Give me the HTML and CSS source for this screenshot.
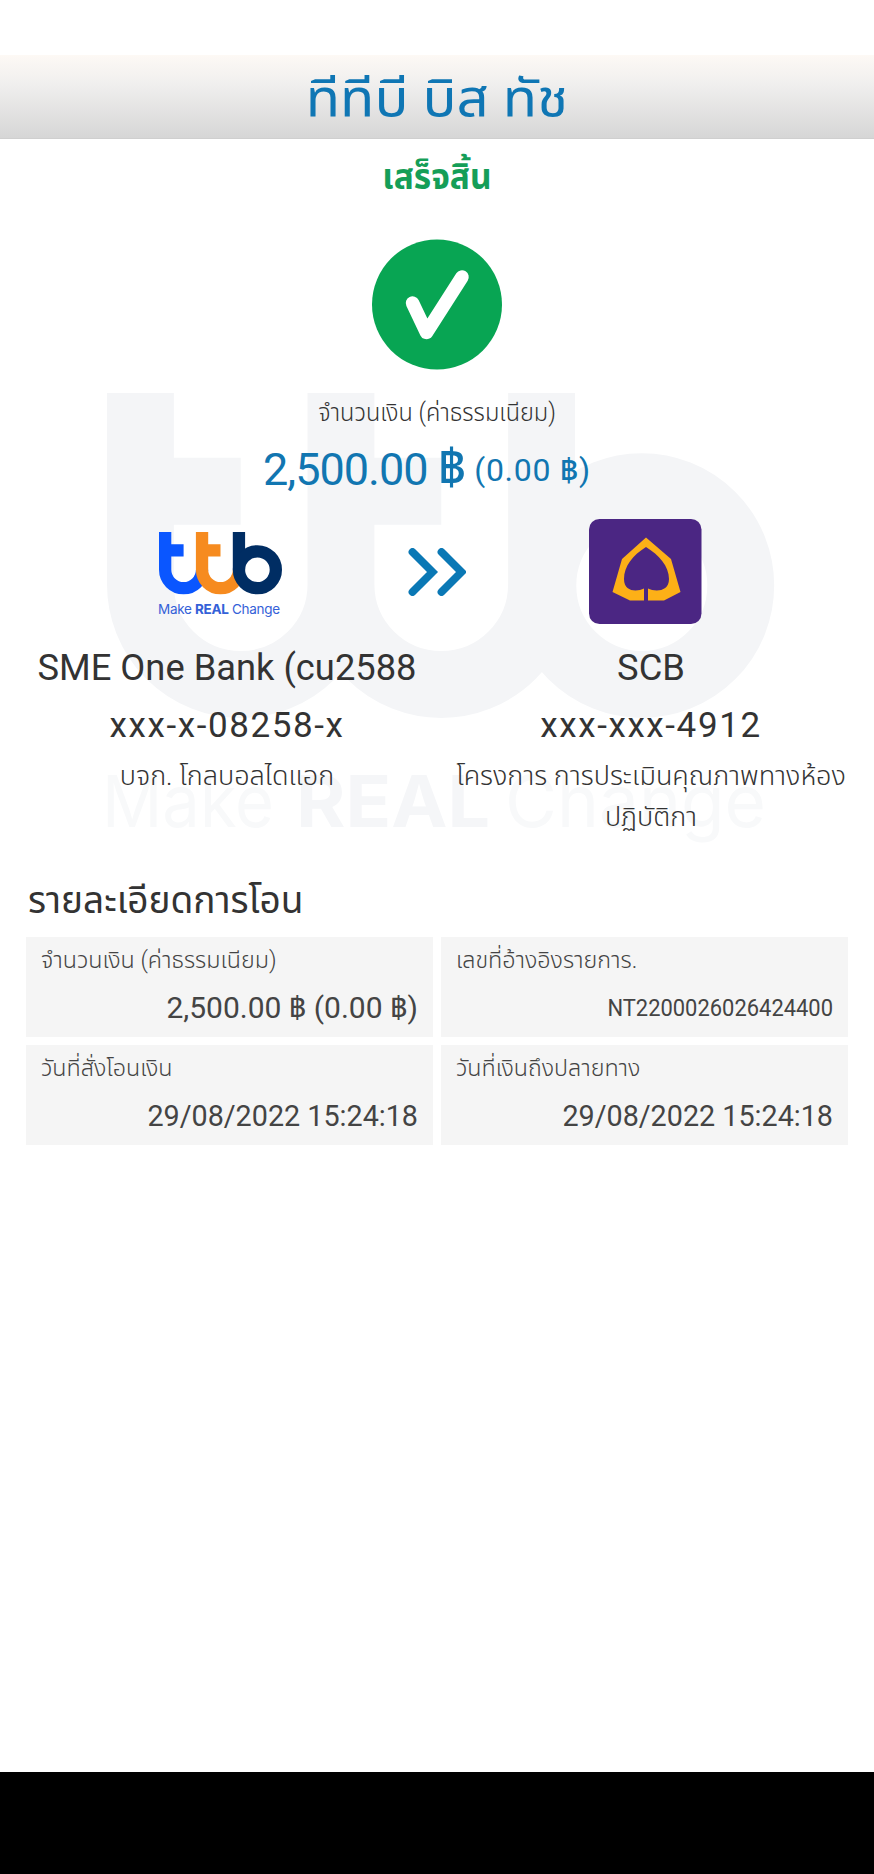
FILE: index.html
```html
<!DOCTYPE html>
<html lang="th">
<head>
<meta charset="utf-8">
<title>ทีทีบี บิส ทัช</title>
<link rel="stylesheet" href="styles.css">
</head>
<body>
<svg class="watermark" width="680" height="460" viewBox="0 0 680 460" aria-hidden="true">
  <g transform="scale(66.85)" class="wm-shape">
    <path d="M.5 0V2.86A1.5 1.5 0 0 0 3.5 2.86M.5 1.47H2M3.5 0V2.86A1.5 1.5 0 0 0 6.5 2.86M3.5 1.47H5M6.5 0V2.86"/>
    <circle cx="8" cy="2.88" r="1.48"/>
  </g>
  <g class="wm-text">
    <text x="-5" y="434" textLength="172" lengthAdjust="spacingAndGlyphs">Make</text>
    <text class="wm-bold" x="189" y="434" textLength="194" lengthAdjust="spacingAndGlyphs">REAL</text>
    <text x="398" y="434" textLength="261" lengthAdjust="spacingAndGlyphs">Change</text>
  </g>
</svg>
<header class="topbar"><h1 class="title">ทีทีบี บิส ทัช</h1></header>
<main class="content">
  <p class="status">เสร็จสิ้น</p>
  <svg class="check" width="132" height="132" viewBox="0 0 132 132">
    <circle cx="66" cy="66.500" r="65" fill="#08a553"/>
    <path d="M41.500 65L55.500 94.500L91 39" fill="none" stroke="#fff" stroke-width="13.500" stroke-linecap="round" stroke-linejoin="round"/>
  </svg>
  <p class="amount-label">จำนวนเงิน (ค่าธรรมเนียม)</p>
  <p class="amount"><span class="amount-main">2,500.00 <b>฿</b></span><span class="amount-fee">(0.00 <b>฿</b>)</span></p>
  <section class="transfer">
    <svg class="logo" width="126" height="88" viewBox="0 0 126 88">
      <g transform="translate(1 1) scale(12.3)" fill="none">
        <path stroke="#0a56ff" d="M.5 0V3.070A1.500 1.500 0 0 0 3.500 3.070M.5 1.500H2"/>
        <path stroke="#f68b1f" d="M3.500 0V3.070A1.500 1.500 0 0 0 6.500 3.070M3.500 1.500H5"/>
        <path stroke="#002d63" d="M6.500 0V3.070"/>
        <circle stroke="#002d63" cx="8" cy="3.070" r="1.500"/>
      </g>
      <text class="logo-text" x="0" y="83" textLength="122">Make <tspan font-weight="700">REAL</tspan> Change</text>
    </svg>
    <svg class="arrows" width="58" height="48" viewBox="0 0 58 48">
      <path d="M4.500 4L24.500 24L4.500 44M33.500 4L53.500 24L33.500 44" fill="none" stroke="#0a78b5" stroke-width="7.800" stroke-linecap="round"/>
    </svg>
    <svg class="scb" width="113" height="105" viewBox="0 0 113 105">
      <rect width="112.500" height="105" rx="10.500" fill="#4b2683"/>
      <path fill="#fdb017" fill-rule="evenodd" d="M57 18.500L82 40L91.500 73L75 81.500H59V69.500C66 73 80 73 80 60C80 47 70 36 57 28C44 36 35 47 35 60C35 73 48 73 55 69.500V81.500H41L23.500 73L33 40Z"/>
    </svg>
  </section>
  <section class="parties">
    <div class="party from">
      <p class="bank">SME One Bank (cu2588</p>
      <p class="account">xxx-x-08258-x</p>
      <p class="owner">บจก. โกลบอลไดแอก</p>
    </div>
    <div class="party to">
      <p class="bank">SCB</p>
      <p class="account">xxx-xxx-4912</p>
      <p class="owner">โครงการ การประเมินคุณภาพทางห้อง<br>ปฏิบัติกา</p>
    </div>
  </section>
  <h2 class="heading">รายละเอียดการโอน</h2>
  <section class="details">
    <div class="card"><p class="label">จำนวนเงิน (ค่าธรรมเนียม)</p><p class="value">2,500.00 ฿ (0.00 ฿)</p></div>
    <div class="card"><p class="label">เลขที่อ้างอิงรายการ.</p><p class="value code">NT2200026026424400</p></div>
    <div class="card"><p class="label">วันที่สั่งโอนเงิน</p><p class="value date">29/08/2022 15:24:18</p></div>
    <div class="card"><p class="label">วันที่เงินถึงปลายทาง</p><p class="value date">29/08/2022 15:24:18</p></div>
  </section>
</main>
<footer class="navbar"></footer>
</body>
</html>
```
FILE: styles.css
```css
* { box-sizing: border-box; }
body {
  margin: 0;
  width: 874px;
  height: 1874px;
  padding-top: 55px;
  display: flex;
  flex-direction: column;
  background: #fff;
  color: #333;
  font-family: Roboto, "Noto Sans", "Noto Sans Thai", sans-serif;
  position: relative;
  overflow: hidden;
}
p, h1, h2 { margin: 0; font-weight: 400; white-space: nowrap; }
.watermark { position: absolute; left: 107px; top: 393px; z-index: -1; overflow: visible; }
.wm-shape { fill: none; stroke: #f4f5f7; stroke-width: 1; }
.wm-text { font-family: Inter, sans-serif; font-size: 72px; fill: #f8f9fa; }
.wm-bold { fill: #f5f6f8; font-weight: 700; }
.topbar {
  height: 84px;
  flex: none;
  background: linear-gradient(#fdf9f5, #f0efee 35%, #d6d6d6);
  border-bottom: 1px solid #cfcfcf;
  display: flex;
  justify-content: center;
}
.title { font-size: 52px; line-height: 88px; color: #0f76b4; transform: scaleX(1.085); }
.content { flex: 1; display: flex; flex-direction: column; }
.status { height: 99px; line-height: 76px; font-size: 36px; font-weight: 700; color: #159e58; text-align: center; transform: scaleX(.93); }
.check { align-self: center; flex: none; }
.amount-label { height: 68px; line-height: 85px; font-size: 25px; font-weight: 300; text-align: center; transform: scaleX(.94); }
.amount { height: 81px; display: flex; justify-content: center; align-items: flex-start; gap: 9px; color: #1176b1; line-height: 64px; padding-right: 20px; }
.amount b { font-weight: 500; }
.amount-main { font-size: 45px; letter-spacing: -1px; }
.amount-main b { font-size: 49px; line-height: 1; }
.amount-fee { font-size: 32px; letter-spacing: .7px; }
.transfer { height: 108px; padding: 0 172px 0 158px; display: flex; justify-content: space-between; align-items: flex-start; }
.logo { margin-top: 12px; }
.logo g { stroke-width: 1; }
.logo-text { font-family: Inter, sans-serif; font-size: 13.5px; fill: #3461d8; }
.arrows { margin: 29px 0 0 0; }
.parties { height: 246px; padding: 12px 20px 0 20px; display: grid; grid-template-columns: 414px 1fr; gap: 14px; }
.party { text-align: center; display: flex; flex-direction: column; align-items: center; }
.bank { font-size: 36.3px; line-height: 58px; }
.account { font-size: 35px; line-height: 58px; letter-spacing: 1.6px; }
.owner { font-size: 27px; line-height: 41px; padding-top: 1px; font-weight: 300; }
.heading { height: 64px; padding-left: 28px; font-size: 37px; line-height: 56px; }
.details { padding: 0 26px; display: grid; grid-template-columns: 407px 407px; grid-auto-rows: 100px; gap: 8px; }
.card { background: #f5f5f5; padding: 0 15px; color: #444; }
.label { font-size: 23.3px; line-height: 47px; font-weight: 300; }
.value { font-size: 30px; line-height: 48px; text-align: right; }
.date { transform: scaleX(.957); transform-origin: right; }
.code { font-size: 24.5px; transform: scaleX(.895); transform-origin: right; }
.navbar { height: 102px; background: #000; flex: none; }
```
